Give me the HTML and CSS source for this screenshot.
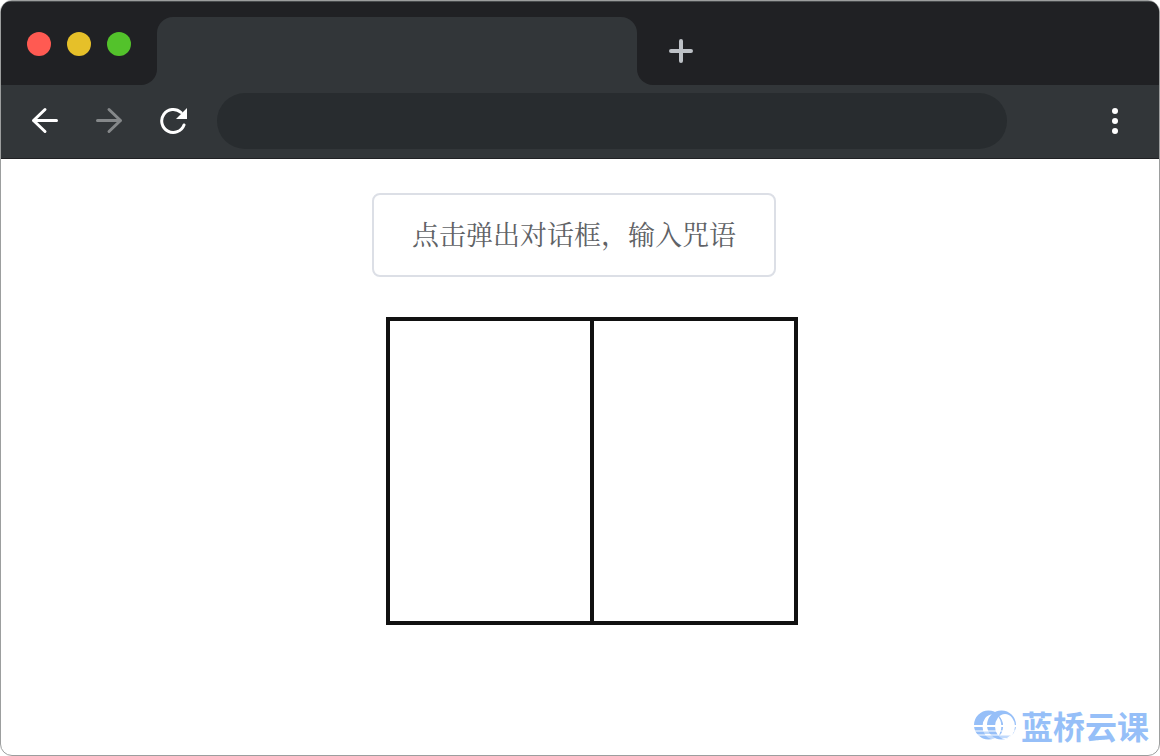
FILE: index.html
```html
<!DOCTYPE html>
<html lang="zh-CN">
<head>
<meta charset="utf-8">
<meta name="viewport" content="width=device-width, initial-scale=1">
<title>咒语</title>
<link rel="stylesheet" href="styles.css">
</head>
<body>
<div class="window">
  <header class="chrome">
    <div class="tabs">
      <div class="lights">
        <span class="light red"></span>
        <span class="light yellow"></span>
        <span class="light green"></span>
      </div>
      <div class="tab-slot"><div class="tab"></div></div>
      <div class="tabs-rest">
        <button class="icon-button" type="button" aria-label="新标签页">
          <svg width="24" height="24" viewBox="0 0 24 24" fill="none" stroke="#bdc1c6" stroke-width="4" stroke-linecap="round"><path d="M2 12H22M12 2V22"/></svg>
        </button>
      </div>
    </div>
    <div class="toolbar">
      <div class="nav">
        <button class="icon-button" type="button" aria-label="后退">
          <svg width="28" height="28" viewBox="0 0 28 28" fill="none" stroke="#fff" stroke-width="3" stroke-linecap="round" stroke-linejoin="round"><path d="M25.500 13.500H2.500M14 2.500L2.500 13.500L14 24.500"/></svg>
        </button>
        <button class="icon-button" type="button" aria-label="前进">
          <svg width="28" height="28" viewBox="0 0 28 28" fill="none" stroke="#85888a" stroke-width="3" stroke-linecap="round" stroke-linejoin="round"><path d="M2.500 13.500H25.500M14 2.500L25.500 13.500L14 24.500"/></svg>
        </button>
        <button class="icon-button" type="button" aria-label="刷新">
          <svg width="28" height="28" viewBox="0 0 28 28" fill="none" stroke="#fff" stroke-width="3" stroke-linecap="round"><path d="M25 18A11.500 11.500 0 1 1 22 5.500"/><path d="M28 1V12H17Z" fill="#fff" stroke="none"/></svg>
        </button>
      </div>
      <input class="address" type="text" aria-label="地址">
      <button class="icon-button menu" type="button" aria-label="菜单">
        <svg width="6" height="26" viewBox="0 0 6 26" fill="#fff"><circle cx="3" cy="3" r="3"/><circle cx="3" cy="13" r="3"/><circle cx="3" cy="23" r="3"/></svg>
      </button>
    </div>
  </header>
  <main class="page">
    <button class="spell" type="button">点击弹出对话框，输入咒语</button>
    <div class="doors">
      <div class="door"></div>
      <div class="door"></div>
    </div>
  </main>
  <footer class="brand">
    <svg width="44" height="32" viewBox="0 0 44 32" aria-hidden="true">
      <g fill="#96bff8" fill-rule="evenodd">
        <path d="M1 16a14.500 14.500 0 1 0 29 0a14.500 14.500 0 1 0 -29 0ZM9.500 17.500a9.500 12 0 1 0 19 0a9.500 12 0 1 0 -19 0Z"/>
        <circle cx="28.500" cy="16" r="14.500"/>
      </g>
      <ellipse cx="32" cy="17.500" rx="10" ry="12.500" fill="#fff"/>
      <path d="M25 6.500C31 12 31 21 26 27C30 20 30 13 25 6.500Z" fill="#96bff8" stroke="#96bff8" stroke-width="1"/>
      <g fill="#96bff8">
        <path d="M5 22H20L22 25H7ZM24 26H38L34 29H9L7 26Z" opacity=".6"/>
      </g>
      <path d="M0 17H44M0 22H44M0 26H44" stroke="#fff" stroke-width="1"/>
      <path d="M0 16H44V18H0Z" fill="#fff"/>
    </svg>
    <span class="brand-name">蓝桥云课</span>
  </footer>
</div>
</body>
</html>
```
FILE: styles.css
```css
* {
  box-sizing: border-box;
}

body {
  margin: 0;
  background: #fff;
}

.window {
  display: flex;
  flex-direction: column;
  min-height: 100vh;
  border: 1px solid #9c9e9e;
  border-radius: 12px;
  overflow: hidden;
  background: #fff;
}

.chrome {
  background: #323639;
  border-bottom: 1px solid #202124;
}

.tabs {
  display: flex;
  height: 84px;
  border-top: 1px solid #484b4d;
}

.lights {
  display: flex;
  gap: 16px;
  width: 156px;
  padding: 30px 26px;
  background: #202124;
  border-bottom-right-radius: 16px;
}

.light {
  width: 24px;
  height: 24px;
  border-radius: 50%;
}

.red {
  background: #ff5a52;
}

.yellow {
  background: #e6c029;
}

.green {
  background: #53c22b;
}

.tab-slot {
  flex: 0 1 480px;
  padding-top: 15px;
  background: #202124;
}

.tab {
  height: 100%;
  background: #323639;
  border-radius: 16px 16px 0 0;
}

.tabs-rest {
  flex: 1;
  padding: 37px 32px;
  background: #202124;
  border-bottom-left-radius: 16px;
}

.icon-button {
  display: block;
  padding: 0;
  border: 0;
  background: none;
}

.icon-button svg {
  display: block;
}

.toolbar {
  display: flex;
  align-items: center;
  padding: 8px 41px 9px 30px;
}

.nav {
  display: flex;
  gap: 36px;
  margin-right: 30px;
}

.address {
  flex: 0 1 790px;
  min-width: 0;
  height: 56px;
  padding: 0 28px;
  border: 0;
  border-radius: 28px;
  background: #282c2f;
  color: #fff;
  font: 24px "Liberation Sans", "Noto Sans CJK SC", sans-serif;
}

.menu {
  margin-left: auto;
}

.page {
  flex: 1;
  display: flex;
  flex-direction: column;
  align-items: center;
  gap: 40px;
  padding-top: 34px;
}

.spell {
  margin-right: 12px;
  padding: 19px 38px 21px;
  border: 2px solid #dcdfe6;
  border-radius: 8px;
  background: #fff;
  color: #606266;
  font: 400 27px/40px "Noto Serif CJK SC", "Noto Sans CJK SC", serif;
}

.doors {
  display: grid;
  grid-template-columns: 204px 204px;
  margin-left: 24px;
  border: 4px solid #111;
  border-right: 0;
}

.door {
  height: 300px;
  border-right: 4px solid #111;
}

.brand {
  display: flex;
  align-items: center;
  justify-content: flex-end;
  gap: 4px;
  padding: 0 10px 14px;
}

.brand-name {
  color: #96bff8;
  font: 700 32px/32px "Noto Sans CJK SC", sans-serif;
}
```
